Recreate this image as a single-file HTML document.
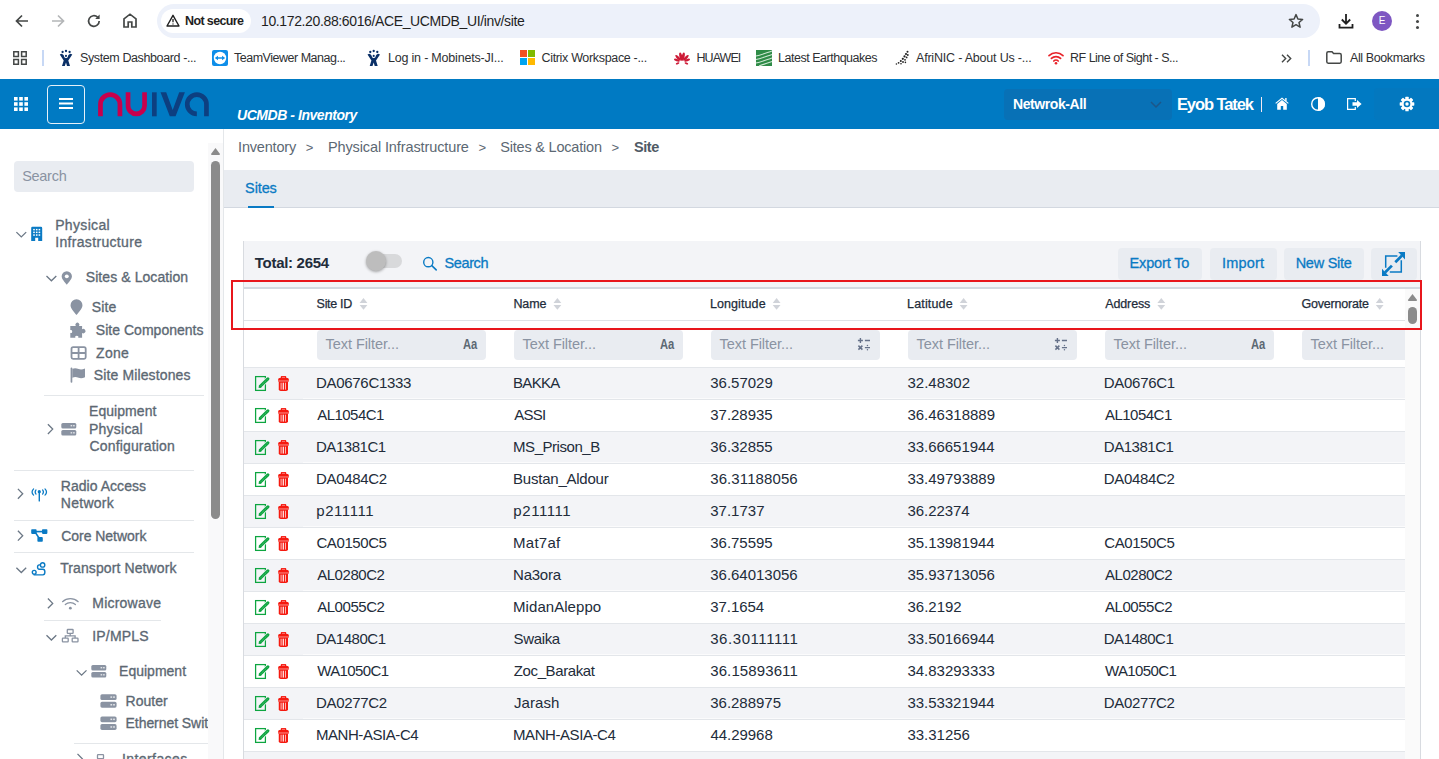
<!DOCTYPE html>
<html>
<head>
<meta charset="utf-8">
<title>Site</title>
<style>
*{box-sizing:border-box;margin:0;padding:0}
html,body{width:1439px;height:759px;overflow:hidden;background:#fff}
body{font-family:"Liberation Sans",sans-serif;position:relative;color:#222c3a;font-size:14.5px;line-height:17px}
div,span{font-family:"Liberation Sans",sans-serif}
.a{position:absolute;white-space:nowrap}
svg{display:block;position:absolute;overflow:visible}
/* ---------- browser chrome ---------- */
#chrome{position:absolute;left:0;top:0;width:1439px;height:79px;background:#fff;overflow:hidden}
#omni{position:absolute;left:157px;top:4px;width:1163px;height:34px;border-radius:17px;background:#edf1fa}
#chip{position:absolute;left:161px;top:9px;width:90px;height:24px;border-radius:12px;background:#fff}
#chiptx{left:185px;top:13px;font-size:12.500px;line-height:16px;font-weight:700;color:#1f1f1f;letter-spacing:-.62px}
#url{left:261px;top:12px;font-size:14px;line-height:18px;color:#1f1f1f;letter-spacing:-.37px}
.bm{position:absolute;top:50px;font-size:12.5px;color:#2e3033;white-space:nowrap;letter-spacing:-.2px;line-height:16px}
/* ---------- app header ---------- */
#hdr{position:absolute;left:0;top:79px;width:1439px;height:50px;background:#007ac3;overflow:hidden}
/* ---------- sidebar ---------- */
#side{position:absolute;left:0;top:0;width:208px;height:759px;overflow:hidden}
#sideborder{position:absolute;left:223px;top:129px;width:1px;height:630px;background:#e4e7ea}
.nav{position:absolute;color:#5c6873;white-space:nowrap;-webkit-text-stroke:.33px #5c6873}
.hr{position:absolute;height:1px;background:#e4e7ea}
/* ---------- main ---------- */
#main{position:absolute;left:0;top:0;width:1439px;height:759px;overflow:hidden}
</style>
</head>
<body>
<div id="chrome">
  <!-- back -->
  <svg style="left:15px;top:14px" width="14" height="14" viewBox="0 0 14 14"><path d="M13 7H2M7 1.5L1.5 7L7 12.5" fill="none" stroke="#444746" stroke-width="1.7"/></svg>
  <!-- forward -->
  <svg style="left:51px;top:14px" width="14" height="14" viewBox="0 0 14 14"><path d="M1 7H12M7 1.5L12.5 7L7 12.5" fill="none" stroke="#b4b6b8" stroke-width="1.7"/></svg>
  <!-- reload -->
  <svg style="left:86px;top:13px" width="16" height="16" viewBox="0 0 16 16"><path d="M13.2 8A5.3 5.3 0 1 1 11.6 4.2" fill="none" stroke="#444746" stroke-width="1.7"/><path d="M13.6 1.6V6H9.2Z" fill="#444746"/></svg>
  <!-- home -->
  <svg style="left:123px;top:13px" width="14" height="15" viewBox="0 0 14 15"><path d="M1 14V5.8L7 1.2L13 5.8V14H8.8V9H5.2V14Z" fill="none" stroke="#444746" stroke-width="1.7" stroke-linejoin="miter"/></svg>
  <div id="omni"></div>
  <div id="chip"></div>
  <!-- warning triangle -->
  <svg style="left:166px;top:14px" width="14" height="13" viewBox="0 0 14 13"><path d="M7 1.3L13 12H1Z" fill="none" stroke="#1f1f1f" stroke-width="1.4" stroke-linejoin="round"/><path d="M7 5V8.3M7 9.4V10.6" stroke="#1f1f1f" stroke-width="1.3"/></svg>
  <div class="a" id="chiptx">Not secure</div>
  <div class="a" id="url">10.172.20.88:6016/ACE_UCMDB_UI/inv/site</div>
  <!-- star -->
  <svg style="left:1288px;top:13px" width="16" height="16" viewBox="0 0 16 16"><path d="M8 1.6L9.9 6L14.6 6.4L11 9.5L12.1 14.2L8 11.7L3.9 14.2L5 9.5L1.4 6.4L6.1 6Z" fill="none" stroke="#444746" stroke-width="1.5" stroke-linejoin="round"/></svg>
  <!-- download -->
  <svg style="left:1338px;top:13px" width="16" height="16" viewBox="0 0 16 16"><path d="M8 1V10.5M3.8 6.5L8 10.7L12.2 6.5M1.5 11V14.6H14.5V11" fill="none" stroke="#1f1f1f" stroke-width="1.8"/></svg>
  <!-- avatar -->
  <div class="a" style="left:1372px;top:11px;width:20px;height:20px;border-radius:10px;background:#7e57c2;color:#fff;font-size:10px;line-height:20px;text-align:center;font-weight:400">E</div>
  <!-- dots -->
  <div class="a" style="left:1416px;top:14px;width:3px;height:3px;border-radius:2px;background:#444746;box-shadow:0 6px 0 #444746,0 12px 0 #444746"></div>

  <!-- bookmarks bar -->
  <svg style="left:13px;top:51px" width="14" height="14" viewBox="0 0 14 14"><path d="M.8 .8H5.4V5.4H.8ZM8.6 .8H13.2V5.4H8.6ZM.8 8.6H5.4V13.2H.8ZM8.6 8.6H13.2V13.2H8.6Z" fill="none" stroke="#444746" stroke-width="1.5"/></svg>
  <div class="a" style="left:42px;top:50px;width:2px;height:16px;background:#c7d8f5"></div>
  <!-- atlassian-like figure 1 -->
  <svg style="left:59px;top:49px" width="15" height="18" viewBox="0 0 15 18"><g fill="#0a2f66"><circle cx="3.600" cy="3" r="1.150"/><circle cx="7" cy="2" r="1.150"/><circle cx="10.600" cy="3" r="1.150"/><path d="M.8 5.600L2.500 4.800L4 5.400L7 9.200L10 5.400L11.500 4.800L13.300 5.600L9.300 11.500L11 17H8L7 13.600L5.800 17H3L4.700 11.500Z"/></g><circle cx="7" cy="6.900" r="2" fill="#fff"/><circle cx="7" cy="6.900" r="1.050" fill="#0a2f66"/></svg>
  <div class="bm" style="left:80px;letter-spacing:-.39px">System Dashboard -...</div>
  <!-- teamviewer -->
  <svg style="left:212px;top:50px" width="16" height="16" viewBox="0 0 16 16"><rect width="16" height="16" rx="2" fill="#0e8ee9"/><circle cx="8" cy="8" r="6.2" fill="#fff"/><path d="M2.800 8L6 5.800V7.200H10V5.800L13.200 8L10 10.200V8.800H6V10.200Z" fill="#0e8ee9"/></svg>
  <div class="bm" style="left:234px;letter-spacing:-.49px">TeamViewer Manag...</div>
  <svg style="left:366px;top:49px" width="15" height="18" viewBox="0 0 15 18"><g transform="translate(0.7 0)"><g fill="#0a2f66"><circle cx="3.600" cy="3" r="1.150"/><circle cx="7" cy="2" r="1.150"/><circle cx="10.600" cy="3" r="1.150"/><path d="M.8 5.600L2.500 4.800L4 5.400L7 9.200L10 5.400L11.500 4.800L13.300 5.600L9.300 11.500L11 17H8L7 13.600L5.800 17H3L4.700 11.500Z"/></g><circle cx="7" cy="6.900" r="2" fill="#fff"/><circle cx="7" cy="6.900" r="1.050" fill="#0a2f66"/></g></svg>
  <div class="bm" style="left:388px">Log in - Mobinets-JI...</div>
  <!-- microsoft -->
  <svg style="left:520px;top:50px" width="15" height="15" viewBox="0 0 15 15"><rect width="7" height="7" fill="#f25022"/><rect x="8" width="7" height="7" fill="#7fba00"/><rect y="8" width="7" height="7" fill="#00a4ef"/><rect x="8" y="8" width="7" height="7" fill="#ffb900"/></svg>
  <div class="bm" style="left:541.500px;letter-spacing:-.33px">Citrix Workspace -...</div>
  <!-- huawei -->
  <svg style="left:673px;top:51px" width="18" height="15" viewBox="0 0 18 15"><g fill="#cd1a36"><ellipse cx="7.84" cy="5.52" rx="1.45" ry="4.2" transform="rotate(-12 7.84 5.52)"/><ellipse cx="10.16" cy="5.52" rx="1.45" ry="4.2" transform="rotate(12 10.16 5.52)"/><ellipse cx="5.11" cy="6.83" rx="1.35" ry="3.7" transform="rotate(-43 5.11 6.83)"/><ellipse cx="12.89" cy="6.83" rx="1.35" ry="3.7" transform="rotate(43 12.89 6.83)"/><ellipse cx="3.80" cy="9.21" rx="1.2" ry="3.0" transform="rotate(-71 3.80 9.21)"/><ellipse cx="14.20" cy="9.21" rx="1.2" ry="3.0" transform="rotate(71 14.20 9.21)"/><ellipse cx="4.60" cy="12.34" rx="0.9" ry="1.9" transform="rotate(-107 4.60 12.34)"/><ellipse cx="13.40" cy="12.34" rx="0.9" ry="1.9" transform="rotate(107 13.40 12.34)"/></g></svg>
  <div class="bm" style="left:696.500px;letter-spacing:-.95px">HUAWEI</div>
  <!-- earthquakes -->
  <svg style="left:756px;top:50px" width="16" height="16" viewBox="0 0 16 16"><rect width="16" height="16" fill="#2e8b47"/><path d="M0 6C5 5 10 3 16 1M0 9.500C5 8.500 10 6.500 16 4.500M0 13C5 12 10 10 16 8M3 16C8 14 12 13 16 11.500" stroke="#cfe8d4" stroke-width="1.100" fill="none"/></svg>
  <div class="bm" style="left:778px;letter-spacing:-.48px">Latest Earthquakes</div>
  <!-- afrinic -->
  <svg style="left:894px;top:50px" width="16" height="16" viewBox="0 0 16 16"><g fill="#222"><circle cx="13.500" cy="1.800" r="1"/><circle cx="12" cy="4" r="1.100"/><circle cx="13.800" cy="5" r=".9"/><circle cx="10.500" cy="6.400" r="1.100"/><circle cx="12.600" cy="7.400" r=".9"/><circle cx="8.800" cy="8.800" r="1.100"/><circle cx="11" cy="9.800" r=".9"/><circle cx="6.800" cy="11" r="1"/><circle cx="9" cy="12" r=".9"/><circle cx="4.600" cy="12.800" r=".9"/><circle cx="7" cy="13.800" r=".8"/><circle cx="2.400" cy="14" r=".8"/><circle cx="11.400" cy="12.400" r=".8"/></g></svg>
  <div class="bm" style="left:916px">AfriNIC - About Us -...</div>
  <!-- wifi red -->
  <svg style="left:1048px;top:51px" width="16" height="14" viewBox="0 0 16 14"><path d="M1 4.600C5 .8 11 .8 15 4.600M3.400 7.400C6 4.900 10 4.900 12.600 7.400M5.800 10C7 8.800 9 8.800 10.200 10" fill="none" stroke="#e8232a" stroke-width="1.700" stroke-linecap="round"/><circle cx="8" cy="12.300" r="1.300" fill="#e8232a"/></svg>
  <div class="bm" style="left:1070px;letter-spacing:-.5px">RF Line of Sight - S...</div>
  <!-- chevrons -->
  <svg style="left:1281px;top:54px" width="11" height="9" viewBox="0 0 11 9"><path d="M1 .8L4.700 4.500L1 8.200M6 .8L9.700 4.500L6 8.200" fill="none" stroke="#444746" stroke-width="1.400"/></svg>
  <div class="a" style="left:1308px;top:50px;width:2px;height:16px;background:#c7d8f5"></div>
  <!-- folder -->
  <svg style="left:1326px;top:51px" width="16" height="13" viewBox="0 0 16 13"><path d="M.8 2.200Q.8 .8 2.200 .8H6L7.600 2.600H13.800Q15.200 2.600 15.200 4V10.800Q15.200 12.200 13.800 12.200H2.200Q.8 12.200 .8 10.800Z" fill="none" stroke="#444746" stroke-width="1.500"/></svg>
  <div class="bm" style="left:1350px;letter-spacing:-.4px">All Bookmarks</div>
</div>
<div id="hdr">
  <!-- 3x3 grid -->
  <svg style="left:14px;top:18px" width="14" height="14" viewBox="0 0 14 14"><g fill="#fff"><rect x="0" y="0" width="3.6" height="3.6"/><rect x="5.200" y="0" width="3.600" height="3.600"/><rect x="10.400" y="0" width="3.600" height="3.600"/><rect x="0" y="5.200" width="3.600" height="3.600"/><rect x="5.200" y="5.200" width="3.600" height="3.600"/><rect x="10.400" y="5.200" width="3.600" height="3.600"/><rect x="0" y="10.400" width="3.600" height="3.600"/><rect x="5.200" y="10.400" width="3.600" height="3.600"/><rect x="10.400" y="10.400" width="3.600" height="3.600"/></g></svg>
  <!-- hamburger -->
  <div class="a" style="left:47px;top:6px;width:38px;height:39px;border:1px solid #e6f1f9;border-radius:4px"></div>
  <div class="a" style="left:59px;top:19px;width:14px;height:2px;background:#fff;box-shadow:0 4.500px 0 #fff,0 9px 0 #fff"></div>
  <!-- logo -->
  <svg style="left:0;top:0" width="230" height="50" viewBox="0 0 230 50">
    <g fill="none" stroke-width="4.700">
      <path d="M100.450 37.300V25.400A9.750 9.750 0 0 1 119.950 25.400V37.300" stroke="#c7004c"/>
      <path d="M128.050 13.300V26.700A8.250 8.250 0 0 0 144.550 26.700V13.300" stroke="#c7004c"/>
      <path d="M154.350 13.300V37.300" stroke="#0d3f80"/>
      <path d="M206.450 37.300V25.300A9.600 9.600 0 1 0 196.850 34.900" stroke="#0d3f80"/>
    </g>
    <path d="M160.500 13.300H166.200L172.700 31L179.200 13.300H184.900L175.600 37.300H169.800Z" fill="#0d3f80"/>
  </svg>
  <div class="a" style="left:237px;top:27px;font-size:14px;line-height:18px;font-weight:700;font-style:italic;color:#fff;letter-spacing:-.45px">UCMDB - Inventory</div>
  <!-- select -->
  <div class="a" style="left:1004px;top:10px;width:168px;height:31px;border-radius:4px;background:#0871b6"></div>
  <div class="a" style="left:1013px;top:16px;font-size:14px;line-height:18px;font-weight:700;color:#fff;letter-spacing:-.42px">Netwrok-All</div>
  <svg style="left:1150px;top:22px" width="12" height="7" viewBox="0 0 12 7"><path d="M1 1L6 6L11 1" fill="none" stroke="#1d5688" stroke-width="1.500"/></svg>
  <div class="a" style="left:1176.90px;top:15px;font-size:16.500px;line-height:20px;font-weight:700;color:#fff;letter-spacing:-1.08px">Eyob Tatek</div>
  <div class="a" style="left:1261px;top:17.500px;width:1.400px;height:15px;background:#f4e9f2"></div>
  <!-- home -->
  <svg style="left:1275px;top:18px" width="14" height="13" viewBox="0 0 14 13"><path d="M7 .4L.3 6L1 6.800L7 1.900L13 6.800L13.700 6Z" fill="#fff"/><path d="M7 3L2.200 6.900V12.800H5.800V9H8.200V12.800H11.800V6.900Z" fill="#fff"/><rect x="10.200" y="1" width="1.400" height="3" fill="#fff"/></svg>
  <!-- contrast -->
  <svg style="left:1311px;top:18px" width="14" height="14" viewBox="0 0 14 14"><circle cx="7" cy="7" r="6.300" fill="none" stroke="#fff" stroke-width="1.400"/><path d="M7 0A7 7 0 0 1 7 14Z" fill="#fff"/></svg>
  <!-- logout -->
  <svg style="left:1347px;top:19px" width="15" height="12" viewBox="0 0 15 12"><path d="M8.300 3V.600H.600V11.400H8.300V9" fill="none" stroke="#fff" stroke-width="1.200"/><path d="M5.500 4.300H10V2L14.600 6L10 10V7.700H5.500Z" fill="#fff"/></svg>
  <!-- gear button -->
  <div class="a" style="left:1374px;top:9px;width:65px;height:32px;background:#0378bf;border-radius:4px 0 0 4px"></div>
  <svg style="left:1399px;top:17px" width="16" height="16" viewBox="-8 -8 16 16"><g fill="#fff"><circle r="5.400"/><g><rect x="-1.700" y="-7.300" width="3.400" height="14.600" rx=".6"/></g><rect x="-1.700" y="-7.300" width="3.400" height="14.600" rx=".6" transform="rotate(45)"/><rect x="-1.700" y="-7.300" width="3.400" height="14.600" rx=".6" transform="rotate(90)"/><rect x="-1.700" y="-7.300" width="3.400" height="14.600" rx=".6" transform="rotate(135)"/></g><circle r="3.300" fill="#0378bf"/><circle r="1.700" fill="#fff"/></svg>
</div>
<div id="side">
<div class="a" style="left:14px;top:161px;width:180px;height:31px;border-radius:4px;background:#e9ecf1"></div>
<div class="a " style="left:22.14px;top:168px;font-size:14.5px;line-height:17px;letter-spacing:-0.27px;color:#8a93a2">Search</div>
<svg style="left:15px;top:231px" width="11" height="6" viewBox="0 0 11 6"><g transform="translate(0.8 0.6)"><path d="M.6 .5L5.500 5.300L10.400 .5" fill="none" stroke="#6b7785" stroke-width="1.300"/></g></svg>
<svg style="left:31px;top:226px" width="11" height="14.200" viewBox="0 0 11 14.200"><g transform="translate(0.2 0.7)"><path d="M1.200 0H9.800Q11 0 11 1.200V14.200H7V11H4V14.200H0V1.200Q0 0 1.200 0Z" fill="#0a7ac4"/><g fill="#fff"><rect x="2" y="2.200" width="1.600" height="1.500"/><rect x="4.700" y="2.200" width="1.600" height="1.500"/><rect x="7.400" y="2.200" width="1.600" height="1.500"/><rect x="2" y="4.900" width="1.600" height="1.500"/><rect x="4.700" y="4.900" width="1.600" height="1.500"/><rect x="7.400" y="4.900" width="1.600" height="1.500"/><rect x="2" y="7.600" width="1.600" height="1.500"/><rect x="4.700" y="7.600" width="1.600" height="1.500"/><rect x="7.400" y="7.600" width="1.600" height="1.500"/></g></g></svg>
<div class="a nav" style="left:55.21px;top:217px;font-size:14px;line-height:17px;letter-spacing:0.33px;">Physical<br>Infrastructure</div>
<svg style="left:45px;top:275px" width="11" height="6" viewBox="0 0 11 6"><g transform="translate(0.9 0.5)"><path d="M.6 .5L5.500 5.300L10.400 .5" fill="none" stroke="#6b7785" stroke-width="1.300"/></g></svg>
<svg style="left:61px;top:271px" width="11" height="13.6" viewBox="0 0 11 14"><g transform="translate(0.3 0.21)"><path d="M5.500 0A5.300 5.300 0 0 1 10.800 5.300C10.800 8.200 7.500 11.500 5.500 14C3.500 11.500 .2 8.200 .2 5.300A5.300 5.300 0 0 1 5.500 0Z" fill="#8a93a2"/><circle cx="5.500" cy="5.300" r="2" fill="#fff"/></g></svg>
<div class="a nav" style="left:85.76px;top:269px;font-size:14px;line-height:17px;letter-spacing:0.08px;">Sites &amp; Location</div>
<svg style="left:70px;top:299px" width="12.4" height="15.9" viewBox="0 0 11 14"><g transform="translate(0.27 0.09)"><path d="M5.500 0A5.300 5.300 0 0 1 10.800 5.300C10.800 8.200 7.500 11.500 5.500 14C3.500 11.500 .2 8.200 .2 5.300A5.300 5.300 0 0 1 5.500 0Z" fill="#8a93a2"/></g></svg>
<div class="a nav" style="left:91.86px;top:299px;font-size:14px;line-height:17px;letter-spacing:0.14px;">Site</div>
<svg style="left:70px;top:322px" width="16.100" height="15.500" viewBox="0 0 16.100 15.500"><g transform="translate(0.3 0.3)"><path d="M0 3.600H5.500A2 2 0 1 1 8.700 3.600H11.800V7A2.200 2.200 0 1 1 11.800 10.600V15.500H7.900A1.500 1.500 0 1 0 5.100 15.500H0V10.400A1.400 1.400 0 1 0 0 7.800Z" fill="#8a93a2"/></g></svg>
<div class="a nav" style="left:95.86px;top:322px;font-size:14px;line-height:17px;letter-spacing:0.02px;">Site Components</div>
<svg style="left:70px;top:346px" width="16" height="13.400" viewBox="0 0 16 13.400"><g transform="translate(0.6 0.3)"><rect x=".9" y=".9" width="14.200" height="11.600" rx="1.600" fill="none" stroke="#8a93a2" stroke-width="1.800"/><path d="M8 .9V12.500M.9 6.700H15.100" stroke="#8a93a2" stroke-width="1.800"/></g></svg>
<div class="a nav" style="left:96.06px;top:345px;font-size:14px;line-height:17px;letter-spacing:0.31px;">Zone</div>
<svg style="left:70px;top:367px" width="14.400" height="15.200" viewBox="0 0 14.400 15.200"><g transform="translate(0.6 0.6)"><rect x="0" y="0" width="1.700" height="15.200" rx=".8" fill="#8a93a2"/><path d="M1.700 1.200C4 .2 6 .6 8 1.400C10 2.200 12 2 14.400 .8V9.600C12 10.800 10 11 8 10.200C6 9.400 4 9 1.700 10.200Z" fill="#8a93a2"/></g></svg>
<div class="a nav" style="left:93.86px;top:367px;font-size:14px;line-height:17px;letter-spacing:0.12px;">Site Milestones</div>
<div class="hr" style="left:44px;top:395px;width:160px"></div>
<svg style="left:47px;top:423px" width="6" height="11" viewBox="0 0 6 11"><g transform="translate(0.4 0.6)"><path d="M.5 .6L5.300 5.500L.5 10.400" fill="none" stroke="#6b7785" stroke-width="1.300"/></g></svg>
<svg style="left:61px;top:423px" width="15" height="12.500" viewBox="0 0 15 12.500"><g transform="translate(0.3 0)"><rect x="0" y="0" width="15" height="5.400" rx="1.500" fill="#8a93a2"/><rect x="0" y="7.100" width="15" height="5.400" rx="1.500" fill="#8a93a2"/><rect x="9.300" y="2" width="1.600" height="1.400" fill="#fff" opacity=".75"/><rect x="11.800" y="2" width="1.600" height="1.400" fill="#fff" opacity=".75"/><rect x="9.300" y="9.100" width="1.600" height="1.400" fill="#fff" opacity=".75"/><rect x="11.800" y="9.100" width="1.600" height="1.400" fill="#fff" opacity=".75"/></g></svg>
<div class="a nav" style="left:89.05px;top:403px;font-size:14px;line-height:17px;letter-spacing:0.05px;">Equipment</div>
<div class="a nav" style="left:89.05px;top:421px;font-size:14px;line-height:17px;letter-spacing:0.22px;">Physical</div>
<div class="a nav" style="left:89.49px;top:438px;font-size:14px;line-height:17px;letter-spacing:0.16px;">Configuration</div>
<div class="hr" style="left:14px;top:470px;width:180px"></div>
<svg style="left:17px;top:488px" width="6" height="11" viewBox="0 0 6 11"><g transform="translate(0.4 0.3)"><path d="M.5 .6L5.300 5.500L.5 10.400" fill="none" stroke="#6b7785" stroke-width="1.300"/></g></svg>
<svg style="left:31px;top:488px" width="16.200" height="13.300" viewBox="0 0 16.200 13.300"><g transform="translate(0.2 0.3)"><g fill="none" stroke="#0a7ac4" stroke-width="1.200" stroke-linecap="round"><path d="M4.800 1.600C3.800 2.800 3.800 4.600 4.800 5.800M2.400 .6C.5 2.600 .5 5 2.400 6.900M11.400 1.600C12.400 2.800 12.400 4.600 11.400 5.800M13.800 .6C15.700 2.600 15.700 5 13.800 6.900"/></g><circle cx="8.100" cy="3.400" r="1.600" fill="#0a7ac4"/><rect x="7.400" y="3.400" width="1.400" height="9.900" rx=".6" fill="#0a7ac4"/></g></svg>
<div class="a nav" style="left:60.75px;top:478px;font-size:14px;line-height:17px;letter-spacing:0.04px;">Radio Access</div>
<div class="a nav" style="left:60.75px;top:495px;font-size:14px;line-height:17px;letter-spacing:0.28px;">Network</div>
<div class="hr" style="left:14px;top:520px;width:180px"></div>
<svg style="left:17px;top:530px" width="6" height="11" viewBox="0 0 6 11"><g transform="translate(0.4 0.2)"><path d="M.5 .6L5.300 5.500L.5 10.400" fill="none" stroke="#6b7785" stroke-width="1.300"/></g></svg>
<svg style="left:31px;top:529px" width="16.200" height="12.400" viewBox="0 0 16.200 12.400"><g transform="translate(0.2 0.3)"><g fill="#0a7ac4"><rect x="0" y="0" width="5.400" height="4.600" rx=".8"/><rect x="10.800" y="0" width="5.400" height="4.600" rx=".8"/><rect x="6.200" y="7.800" width="5.400" height="4.600" rx=".8"/><rect x="4" y="1.500" width="8" height="1.600"/><path d="M3.400 3.400L4.800 2.600L8.600 8.400L7.200 9.200Z"/></g></g></svg>
<div class="a nav" style="left:61.19px;top:528px;font-size:14px;line-height:17px;letter-spacing:-0.03px;">Core Network</div>
<div class="hr" style="left:14px;top:552px;width:180px"></div>
<svg style="left:15px;top:567px" width="11" height="6" viewBox="0 0 11 6"><g transform="translate(0.8 0.2)"><path d="M.6 .5L5.500 5.300L10.400 .5" fill="none" stroke="#6b7785" stroke-width="1.300"/></g></svg>
<svg style="left:31px;top:561px" width="14.300" height="13.800" viewBox="0 0 14.300 13.800"><g transform="translate(0.6 0.9)"><g fill="none" stroke="#0a7ac4" stroke-width="1.400"><circle cx="11" cy="3" r="2.200"/><circle cx="2.600" cy="10.400" r="1.900"/><path d="M8.800 3H7.600C5.400 3 5.400 7.400 7.600 7.400H11.200C14 7.400 14 13 11.200 13H2.600" stroke-linecap="round"/></g></g></svg>
<div class="a nav" style="left:60.19px;top:560px;font-size:14px;line-height:17px;letter-spacing:0.1px;">Transport Network</div>
<svg style="left:47px;top:597px" width="6" height="11" viewBox="0 0 6 11"><g transform="translate(0.4 0.9)"><path d="M.5 .6L5.300 5.500L.5 10.400" fill="none" stroke="#6b7785" stroke-width="1.300"/></g></svg>
<svg style="left:61px;top:597px" width="17.300" height="11.800" viewBox="0 0 17.300 11.800"><g transform="translate(0.7 0.9)"><g fill="none" stroke="#8a93a2" stroke-width="1.200" stroke-linecap="round"><path d="M.8 3.800C5.200 -.4 12.100 -.4 16.500 3.800M3.600 6.600C6.400 4 10.900 4 13.700 6.600"/></g><circle cx="8.650" cy="10.300" r="1.400" fill="#8a93a2"/></g></svg>
<div class="a nav" style="left:92.35px;top:595px;font-size:14px;line-height:17px;letter-spacing:0.21px;">Microwave</div>
<div class="hr" style="left:44px;top:620px;width:117px"></div>
<svg style="left:45px;top:634px" width="11" height="6" viewBox="0 0 11 6"><g transform="translate(0.9 0.7)"><path d="M.6 .5L5.500 5.300L10.400 .5" fill="none" stroke="#6b7785" stroke-width="1.300"/></g></svg>
<svg style="left:61px;top:628px" width="17" height="13.800" viewBox="0 0 17 13.800"><g transform="translate(0.7 0.8)"><g fill="none" stroke="#8a93a2" stroke-width="1.300"><rect x="5.600" y=".7" width="5.800" height="3.800" rx=".6"/><rect x=".7" y="9.300" width="5.800" height="3.800" rx=".6"/><rect x="10.500" y="9.300" width="5.800" height="3.800" rx=".6"/><path d="M8.500 4.500V7H3.600V9.300M8.500 7H13.400V9.300"/></g></g></svg>
<div class="a nav" style="left:92.21px;top:628px;font-size:14px;line-height:17px;letter-spacing:0.21px;">IP/MPLS</div>
<svg style="left:76px;top:669px" width="11" height="6" viewBox="0 0 11 6"><g transform="translate(0.1 0.9)"><path d="M.6 .5L5.500 5.300L10.400 .5" fill="none" stroke="#6b7785" stroke-width="1.300"/></g></svg>
<svg style="left:91px;top:665px" width="15" height="12.500" viewBox="0 0 15 12.500"><g transform="translate(0.3 0)"><rect x="0" y="0" width="15" height="5.400" rx="1.500" fill="#8a93a2"/><rect x="0" y="7.100" width="15" height="5.400" rx="1.500" fill="#8a93a2"/><rect x="9.300" y="2" width="1.600" height="1.400" fill="#fff" opacity=".75"/><rect x="11.800" y="2" width="1.600" height="1.400" fill="#fff" opacity=".75"/><rect x="9.300" y="9.100" width="1.600" height="1.400" fill="#fff" opacity=".75"/><rect x="11.800" y="9.100" width="1.600" height="1.400" fill="#fff" opacity=".75"/></g></svg>
<div class="a nav" style="left:119.05px;top:663px;font-size:14px;line-height:17px;letter-spacing:0.01px;">Equipment</div>
<svg style="left:100px;top:694px" width="16.200" height="13.900" viewBox="0 0 15 12.500"><g transform="translate(0.37 0)"><rect x="0" y="0" width="15" height="5.400" rx="1.500" fill="#8a93a2"/><rect x="0" y="7.100" width="15" height="5.400" rx="1.500" fill="#8a93a2"/><rect x="9.300" y="2" width="1.600" height="1.400" fill="#fff" opacity=".75"/><rect x="11.800" y="2" width="1.600" height="1.400" fill="#fff" opacity=".75"/><rect x="9.300" y="9.100" width="1.600" height="1.400" fill="#fff" opacity=".75"/><rect x="11.800" y="9.100" width="1.600" height="1.400" fill="#fff" opacity=".75"/></g></svg>
<div class="a nav" style="left:125.55px;top:693px;font-size:14px;line-height:17px;letter-spacing:0.03px;">Router</div>
<svg style="left:100px;top:716px" width="16.200" height="13.900" viewBox="0 0 15 12.500"><g transform="translate(0.37 0.18)"><rect x="0" y="0" width="15" height="5.400" rx="1.500" fill="#8a93a2"/><rect x="0" y="7.100" width="15" height="5.400" rx="1.500" fill="#8a93a2"/><rect x="9.300" y="2" width="1.600" height="1.400" fill="#fff" opacity=".75"/><rect x="11.800" y="2" width="1.600" height="1.400" fill="#fff" opacity=".75"/><rect x="9.300" y="9.100" width="1.600" height="1.400" fill="#fff" opacity=".75"/><rect x="11.800" y="9.100" width="1.600" height="1.400" fill="#fff" opacity=".75"/></g></svg>
<div class="a nav" style="left:125.55px;top:715px;font-size:14px;line-height:17px;letter-spacing:-0.06px;">Ethernet Switch</div>
<div class="hr" style="left:74px;top:743px;width:140px"></div>
<svg style="left:77px;top:753px" width="6" height="11" viewBox="0 0 6 11"><g transform="translate(0 0.3)"><path d="M.5 .6L5.300 5.500L.5 10.400" fill="none" stroke="#6b7785" stroke-width="1.300"/></g></svg>
<svg style="left:93px;top:754px" width="15" height="13" viewBox="0 0 15 13"><g fill="none" stroke="#8a93a2" stroke-width="1.300"><rect x="4.500" y=".7" width="6" height="4" rx=".6"/><path d="M7.500 4.700V8"/></g></svg>
<div class="a nav" style="left:121.91px;top:751px;font-size:14px;line-height:17px;letter-spacing:0.43px;">Interfaces</div>
</div>
<div class="a" style="left:208px;top:143px;width:15px;height:616px;background:#f9f9fa"></div>
<svg style="left:211px;top:147px" width="9" height="7" viewBox="0 0 9 7"><g transform="translate(0 0.9)"><path d="M4.500 0L9 6Q9 7 8 7H1Q0 7 0 6Z" fill="#8b8b8b"/></g></svg>
<div class="a" style="left:211px;top:161px;width:9px;height:357.500px;border-radius:4.500px;background:#8b8b8b"></div>
<div id="sideborder"></div>
<div id="main">
<div class="a " style="left:238.06px;top:138px;font-size:14.5px;line-height:18px;letter-spacing:-0.19px;color:#5c6873;">Inventory</div>
<div class="a " style="left:305.66px;top:139px;font-size:13px;line-height:18px;letter-spacing:0px;color:#5c6873;">&gt;</div>
<div class="a " style="left:327.91px;top:138px;font-size:14.5px;line-height:18px;letter-spacing:-0.11px;color:#5c6873;">Physical Infrastructure</div>
<div class="a " style="left:478.56px;top:139px;font-size:13px;line-height:18px;letter-spacing:0px;color:#5c6873;">&gt;</div>
<div class="a " style="left:500.34px;top:138px;font-size:14.5px;line-height:18px;letter-spacing:-0.21px;color:#5c6873;">Sites &amp; Location</div>
<div class="a " style="left:611.56px;top:139px;font-size:13px;line-height:18px;letter-spacing:0px;color:#5c6873;">&gt;</div>
<div class="a " style="left:634.08px;top:138px;font-size:14.5px;line-height:18px;font-weight:700;letter-spacing:-0.49px;color:#4f5a65;">Site</div>
<div class="a" style="left:224px;top:170px;width:1215px;height:38px;background:#e9ecf1;border-bottom:1px solid #d3d8e0"></div>
<div class="a " style="left:245.09px;top:179px;font-size:14.5px;line-height:18px;letter-spacing:-0.12px;color:#0a7ac4;-webkit-text-stroke:.3px #0a7ac4;">Sites</div>
<div class="a" style="left:247.800px;top:205.600px;width:26.200px;height:2px;background:#0a7ac4"></div>
<div class="a" style="left:243px;top:241px;width:1178px;height:518px;background:#f3f4f7;border-left:1px solid #d8dbe0;border-right:1px solid #d8dbe0"></div>
<div class="a " style="left:254.83px;top:254px;font-size:15px;line-height:18px;font-weight:700;letter-spacing:-0.3px;color:#222c3a;">Total: 2654</div>
<div class="a" style="left:374px;top:254px;width:28px;height:14px;border-radius:7px;background:#d8d9db"></div>
<div class="a" style="left:365.500px;top:251px;width:20px;height:20px;border-radius:10px;background:#bdbdbd;box-shadow:0 1px 3px rgba(0,0,0,.35)"></div>
<svg style="left:422px;top:256px" width="15" height="15.500" viewBox="0 0 15 15.500"><g transform="translate(0.5 0)"><circle cx="5.800" cy="6.150" r="4.600" fill="none" stroke="#0a7ac4" stroke-width="1.400"/><path d="M9.300 9.700L13.700 13.900" stroke="#0a7ac4" stroke-width="1.600" stroke-linecap="round"/></g></svg>
<div class="a " style="left:444.59px;top:254px;font-size:14.5px;line-height:18px;letter-spacing:-0.41px;color:#0a7ac4;-webkit-text-stroke:.3px #0a7ac4;">Search</div>
<div class="a" style="left:1118px;top:248px;width:84px;height:32px;border-radius:4px;background:#e9ecf1"></div>
<div class="a" style="left:1210px;top:248px;width:67px;height:32px;border-radius:4px;background:#e9ecf1"></div>
<div class="a" style="left:1284px;top:248px;width:80px;height:32px;border-radius:4px;background:#e9ecf1"></div>
<div class="a" style="left:1371px;top:248px;width:46px;height:32px;border-radius:4px;background:#e9ecf1"></div>
<div class="a " style="left:1129.56px;top:254px;font-size:14.5px;line-height:18px;letter-spacing:-0.14px;color:#0a7ac4;-webkit-text-stroke:.3px #0a7ac4;">Export To</div>
<div class="a " style="left:1222.01px;top:254px;font-size:14.5px;line-height:18px;letter-spacing:0.21px;color:#0a7ac4;-webkit-text-stroke:.3px #0a7ac4;">Import</div>
<div class="a " style="left:1295.66px;top:254px;font-size:14.5px;line-height:18px;letter-spacing:-0.26px;color:#0a7ac4;-webkit-text-stroke:.3px #0a7ac4;">New Site</div>
<svg style="left:1382px;top:252px" width="23" height="24" viewBox="0 0 23 24"><g fill="none" stroke="#0a7ac4" stroke-width="1.500"><path d="M3.700 15.700V4.100H15.400M7.800 20H19.300V8.300"/></g><path d="M13.300 10.200L20 3.500" stroke="#0a7ac4" stroke-width="2.700"/><path d="M16.200 0H23V7.400Z" fill="#0a7ac4"/><path d="M9.900 13.600L3 20.500" stroke="#0a7ac4" stroke-width="2.700"/><path d="M0 16.800V24H6.700Z" fill="#0a7ac4"/></svg>
<div class="a" style="left:244px;top:287px;width:1176px;height:2px;background:#d3d8e0"></div>
<div class="a" style="left:1405px;top:289px;width:15px;height:470px;background:#fafafa"></div>
<div class="a" style="left:244px;top:289px;width:1161px;height:78px;background:#fff"></div>
<div class="a" style="left:244px;top:320px;width:1161px;height:1px;background:#dfe2e6"></div>
<div class="a " style="left:316.61px;top:296px;font-size:12.5px;line-height:16px;letter-spacing:-0.31px;color:#222c3a;-webkit-text-stroke:.25px #222c3a;">Site ID</div>
<svg style="left:359px;top:298px" width="7.800" height="11.700" viewBox="0 0 7.800 11.700"><g transform="translate(0.6 0.1)"><path d="M3.900 0L7.800 4.900H0Z" fill="#d0d3d9"/><path d="M3.900 11.700L7.800 6.800H0Z" fill="#d0d3d9"/></g></svg>
<div class="a " style="left:513.4px;top:296px;font-size:12.5px;line-height:16px;letter-spacing:-0.1px;color:#222c3a;-webkit-text-stroke:.25px #222c3a;">Name</div>
<svg style="left:553px;top:298px" width="7.800" height="11.700" viewBox="0 0 7.800 11.700"><g transform="translate(0.5 0.1)"><path d="M3.900 0L7.800 4.900H0Z" fill="#d0d3d9"/><path d="M3.900 11.700L7.800 6.800H0Z" fill="#d0d3d9"/></g></svg>
<div class="a " style="left:709.9px;top:296px;font-size:12.5px;line-height:16px;letter-spacing:0.1px;color:#222c3a;-webkit-text-stroke:.25px #222c3a;">Longitude</div>
<svg style="left:772px;top:298px" width="7.800" height="11.700" viewBox="0 0 7.800 11.700"><g transform="translate(0.7 0.1)"><path d="M3.900 0L7.800 4.900H0Z" fill="#d0d3d9"/><path d="M3.900 11.700L7.800 6.800H0Z" fill="#d0d3d9"/></g></svg>
<div class="a " style="left:907.1px;top:296px;font-size:12.5px;line-height:16px;letter-spacing:0.15px;color:#222c3a;-webkit-text-stroke:.25px #222c3a;">Latitude</div>
<svg style="left:959px;top:298px" width="7.800" height="11.700" viewBox="0 0 7.800 11.700"><g transform="translate(0.7 0.1)"><path d="M3.900 0L7.800 4.900H0Z" fill="#d0d3d9"/><path d="M3.900 11.700L7.800 6.800H0Z" fill="#d0d3d9"/></g></svg>
<div class="a " style="left:1105.3px;top:296px;font-size:12.5px;line-height:16px;letter-spacing:-0.14px;color:#222c3a;-webkit-text-stroke:.25px #222c3a;">Address</div>
<svg style="left:1157px;top:298px" width="7.800" height="11.700" viewBox="0 0 7.800 11.700"><g transform="translate(0.4 0.1)"><path d="M3.900 0L7.800 4.900H0Z" fill="#d0d3d9"/><path d="M3.900 11.700L7.800 6.800H0Z" fill="#d0d3d9"/></g></svg>
<div class="a " style="left:1301.5px;top:296px;font-size:12.5px;line-height:16px;letter-spacing:-0.2px;color:#222c3a;-webkit-text-stroke:.25px #222c3a;">Governorate</div>
<svg style="left:1375px;top:298px" width="7.800" height="11.700" viewBox="0 0 7.800 11.700"><g transform="translate(0.8 0.1)"><path d="M3.900 0L7.800 4.900H0Z" fill="#d0d3d9"/><path d="M3.900 11.700L7.800 6.800H0Z" fill="#d0d3d9"/></g></svg>
<div class="a" style="left:317px;top:330px;width:169px;height:30px;border-radius:4px;background:#e9ecf1"></div>
<div class="a " style="left:325.57px;top:335px;font-size:14.5px;line-height:18px;letter-spacing:-0.06px;color:#8a93a2;">Text Filter...</div>
<div class="a " style="left:462.82px;top:336px;font-size:14px;line-height:16px;font-weight:700;color:#5c6873;transform:scaleX(0.799);transform-origin:0 0;">Aa</div>
<div class="a" style="left:514px;top:330px;width:169px;height:30px;border-radius:4px;background:#e9ecf1"></div>
<div class="a " style="left:522.57px;top:335px;font-size:14.5px;line-height:18px;letter-spacing:-0.06px;color:#8a93a2;">Text Filter...</div>
<div class="a " style="left:659.82px;top:336px;font-size:14px;line-height:16px;font-weight:700;color:#5c6873;transform:scaleX(0.799);transform-origin:0 0;">Aa</div>
<div class="a" style="left:711px;top:330px;width:169px;height:30px;border-radius:4px;background:#e9ecf1"></div>
<div class="a " style="left:719.57px;top:335px;font-size:14.5px;line-height:18px;letter-spacing:-0.06px;color:#8a93a2;">Text Filter...</div>
<svg style="left:857px;top:338px" width="12.100" height="12" viewBox="0 0 12.100 12"><g transform="translate(0.9 0.1)"><g stroke="#66728a" fill="none"><path d="M0 2.450H5M2.500 0V4.900M7 2.450H12.100M7 9.500H12.100" stroke-width="1.400"/><path d="M.5 7.500L4.500 11.500M4.500 7.500L.5 11.500" stroke-width="1.500"/></g><circle cx="9.550" cy="7.300" r=".75" fill="#66728a"/><circle cx="9.550" cy="11.700" r=".75" fill="#66728a"/></g></svg>
<div class="a" style="left:908px;top:330px;width:169px;height:30px;border-radius:4px;background:#e9ecf1"></div>
<div class="a " style="left:916.57px;top:335px;font-size:14.5px;line-height:18px;letter-spacing:-0.06px;color:#8a93a2;">Text Filter...</div>
<svg style="left:1054px;top:338px" width="12.100" height="12" viewBox="0 0 12.100 12"><g transform="translate(0.9 0.1)"><g stroke="#66728a" fill="none"><path d="M0 2.450H5M2.500 0V4.900M7 2.450H12.100M7 9.500H12.100" stroke-width="1.400"/><path d="M.5 7.500L4.500 11.500M4.500 7.500L.5 11.500" stroke-width="1.500"/></g><circle cx="9.550" cy="7.300" r=".75" fill="#66728a"/><circle cx="9.550" cy="11.700" r=".75" fill="#66728a"/></g></svg>
<div class="a" style="left:1105px;top:330px;width:169px;height:30px;border-radius:4px;background:#e9ecf1"></div>
<div class="a " style="left:1113.57px;top:335px;font-size:14.5px;line-height:18px;letter-spacing:-0.06px;color:#8a93a2;">Text Filter...</div>
<div class="a " style="left:1250.82px;top:336px;font-size:14px;line-height:16px;font-weight:700;color:#5c6873;transform:scaleX(0.799);transform-origin:0 0;">Aa</div>
<div class="a" style="left:1302px;top:330px;width:103px;height:30px;border-radius:4px 0 0 4px;background:#e9ecf1"></div>
<div class="a " style="left:1310.57px;top:335px;font-size:14.5px;line-height:18px;letter-spacing:-0.06px;color:#8a93a2;">Text Filter...</div>
<div class="a" style="left:244px;top:367px;width:1161px;height:32px;background:#f3f4f7;border-top:1px solid #e3e6ea"></div>
<div class="a" style="left:303px;top:398px;width:1102px;height:1px;background:#fbfbfc"></div>
<svg style="left:254px;top:375px" width="16" height="16" viewBox="0 0 16 16"><g transform="translate(0.5 0.5)"><rect x="1.100" y="1.100" width="9.800" height="13.800" fill="none" stroke="#0da540" stroke-width="1.250"/><path d="M5.600 10.900L13.400 3.300" stroke="#f3f4f7" stroke-width="4.600" stroke-linecap="round"/><path d="M6 10.500L13.400 3.300" stroke="#0da540" stroke-width="3.100" stroke-linecap="round"/><path d="M4.100 12.500L4.500 9.600L7.100 12Z" fill="#0da540"/><path d="M6.300 10.300L13.100 3.600" stroke="#f3f4f7" stroke-width=".5" stroke-dasharray=".7 1" opacity=".8"/></g></svg>
<svg style="left:278px;top:375px" width="11" height="15.200" viewBox="0 0 11 15.200"><g transform="translate(0 0.9)"><rect x="2.800" y="0" width="5.400" height="2.600" rx=".9" fill="#f5190f"/><rect x="4" y="1" width="3" height=".8" fill="#fbb" /><path d="M0 5.700V4.100Q0 2 2.600 1.900H8.400Q11 2 11 4.100V5.700Z" fill="#f5190f"/><rect x="0" y="4.100" width="11" height=".7" fill="#fff" opacity=".4"/><path d="M.75 5.700H10V13.300Q10 15.100 8 15.100H2.750Q.75 15.100 .75 13.300Z" fill="#f5190f"/><rect x="2.300" y="6.800" width="2.400" height="6.900" fill="#fff" opacity=".45"/><rect x="5.100" y="6.800" width=".9" height="6.900" fill="#fff" opacity=".95"/><rect x="7.200" y="6.800" width=".8" height="6.900" fill="#fff" opacity=".85"/></g></svg>
<div class="a " style="left:315.97px;top:374px;font-size:15px;line-height:18px;letter-spacing:-0.3px;color:#222c3a;">DA0676C1333</div>
<div class="a " style="left:513.07px;top:374px;font-size:15px;line-height:18px;letter-spacing:-0.72px;color:#222c3a;">BAKKA</div>
<div class="a " style="left:710.23px;top:374px;font-size:15px;line-height:18px;letter-spacing:0px;color:#222c3a;">36.57029</div>
<div class="a " style="left:907.43px;top:374px;font-size:15px;line-height:18px;letter-spacing:0.01px;color:#222c3a;">32.48302</div>
<div class="a " style="left:1103.77px;top:374px;font-size:15px;line-height:18px;letter-spacing:-0.28px;color:#222c3a;">DA0676C1</div>
<div class="a" style="left:244px;top:399px;width:1161px;height:32px;background:#fff;border-top:1px solid #e3e6ea"></div>
<svg style="left:254px;top:407px" width="16" height="16" viewBox="0 0 16 16"><g transform="translate(0.5 0.5)"><rect x="1.100" y="1.100" width="9.800" height="13.800" fill="none" stroke="#0da540" stroke-width="1.250"/><path d="M5.600 10.900L13.400 3.300" stroke="#fff" stroke-width="4.600" stroke-linecap="round"/><path d="M6 10.500L13.400 3.300" stroke="#0da540" stroke-width="3.100" stroke-linecap="round"/><path d="M4.100 12.500L4.500 9.600L7.100 12Z" fill="#0da540"/><path d="M6.300 10.300L13.100 3.600" stroke="#fff" stroke-width=".5" stroke-dasharray=".7 1" opacity=".8"/></g></svg>
<svg style="left:278px;top:407px" width="11" height="15.200" viewBox="0 0 11 15.200"><g transform="translate(0 0.9)"><rect x="2.800" y="0" width="5.400" height="2.600" rx=".9" fill="#f5190f"/><rect x="4" y="1" width="3" height=".8" fill="#fbb" /><path d="M0 5.700V4.100Q0 2 2.600 1.900H8.400Q11 2 11 4.100V5.700Z" fill="#f5190f"/><rect x="0" y="4.100" width="11" height=".7" fill="#fff" opacity=".4"/><path d="M.75 5.700H10V13.300Q10 15.100 8 15.100H2.750Q.75 15.100 .75 13.300Z" fill="#f5190f"/><rect x="2.300" y="6.800" width="2.400" height="6.900" fill="#fff" opacity=".45"/><rect x="5.100" y="6.800" width=".9" height="6.900" fill="#fff" opacity=".95"/><rect x="7.200" y="6.800" width=".8" height="6.900" fill="#fff" opacity=".85"/></g></svg>
<div class="a " style="left:317.17px;top:406px;font-size:15px;line-height:18px;letter-spacing:-0.52px;color:#222c3a;">AL1054C1</div>
<div class="a " style="left:514.27px;top:406px;font-size:15px;line-height:18px;letter-spacing:-0.79px;color:#222c3a;">ASSI</div>
<div class="a " style="left:710.23px;top:406px;font-size:15px;line-height:18px;letter-spacing:-0.01px;color:#222c3a;">37.28935</div>
<div class="a " style="left:907.43px;top:406px;font-size:15px;line-height:18px;letter-spacing:-0px;color:#222c3a;">36.46318889</div>
<div class="a " style="left:1104.97px;top:406px;font-size:15px;line-height:18px;letter-spacing:-0.52px;color:#222c3a;">AL1054C1</div>
<div class="a" style="left:244px;top:431px;width:1161px;height:32px;background:#f3f4f7;border-top:1px solid #e3e6ea"></div>
<div class="a" style="left:303px;top:462px;width:1102px;height:1px;background:#fbfbfc"></div>
<svg style="left:254px;top:439px" width="16" height="16" viewBox="0 0 16 16"><g transform="translate(0.5 0.5)"><rect x="1.100" y="1.100" width="9.800" height="13.800" fill="none" stroke="#0da540" stroke-width="1.250"/><path d="M5.600 10.900L13.400 3.300" stroke="#f3f4f7" stroke-width="4.600" stroke-linecap="round"/><path d="M6 10.500L13.400 3.300" stroke="#0da540" stroke-width="3.100" stroke-linecap="round"/><path d="M4.100 12.500L4.500 9.600L7.100 12Z" fill="#0da540"/><path d="M6.300 10.300L13.100 3.600" stroke="#f3f4f7" stroke-width=".5" stroke-dasharray=".7 1" opacity=".8"/></g></svg>
<svg style="left:278px;top:439px" width="11" height="15.200" viewBox="0 0 11 15.200"><g transform="translate(0 0.9)"><rect x="2.800" y="0" width="5.400" height="2.600" rx=".9" fill="#f5190f"/><rect x="4" y="1" width="3" height=".8" fill="#fbb" /><path d="M0 5.700V4.100Q0 2 2.600 1.900H8.400Q11 2 11 4.100V5.700Z" fill="#f5190f"/><rect x="0" y="4.100" width="11" height=".7" fill="#fff" opacity=".4"/><path d="M.75 5.700H10V13.300Q10 15.100 8 15.100H2.750Q.75 15.100 .75 13.300Z" fill="#f5190f"/><rect x="2.300" y="6.800" width="2.400" height="6.900" fill="#fff" opacity=".45"/><rect x="5.100" y="6.800" width=".9" height="6.900" fill="#fff" opacity=".95"/><rect x="7.200" y="6.800" width=".8" height="6.900" fill="#fff" opacity=".85"/></g></svg>
<div class="a " style="left:315.97px;top:438px;font-size:15px;line-height:18px;letter-spacing:-0.46px;color:#222c3a;">DA1381C1</div>
<div class="a " style="left:513.07px;top:438px;font-size:15px;line-height:18px;letter-spacing:-0.46px;color:#222c3a;">MS_Prison_B</div>
<div class="a " style="left:710.23px;top:438px;font-size:15px;line-height:18px;letter-spacing:-0.01px;color:#222c3a;">36.32855</div>
<div class="a " style="left:907.43px;top:438px;font-size:15px;line-height:18px;letter-spacing:-0.03px;color:#222c3a;">33.66651944</div>
<div class="a " style="left:1103.77px;top:438px;font-size:15px;line-height:18px;letter-spacing:-0.46px;color:#222c3a;">DA1381C1</div>
<div class="a" style="left:244px;top:463px;width:1161px;height:32px;background:#fff;border-top:1px solid #e3e6ea"></div>
<svg style="left:254px;top:471px" width="16" height="16" viewBox="0 0 16 16"><g transform="translate(0.5 0.5)"><rect x="1.100" y="1.100" width="9.800" height="13.800" fill="none" stroke="#0da540" stroke-width="1.250"/><path d="M5.600 10.900L13.400 3.300" stroke="#fff" stroke-width="4.600" stroke-linecap="round"/><path d="M6 10.500L13.400 3.300" stroke="#0da540" stroke-width="3.100" stroke-linecap="round"/><path d="M4.100 12.500L4.500 9.600L7.100 12Z" fill="#0da540"/><path d="M6.300 10.300L13.100 3.600" stroke="#fff" stroke-width=".5" stroke-dasharray=".7 1" opacity=".8"/></g></svg>
<svg style="left:278px;top:471px" width="11" height="15.200" viewBox="0 0 11 15.200"><g transform="translate(0 0.9)"><rect x="2.800" y="0" width="5.400" height="2.600" rx=".9" fill="#f5190f"/><rect x="4" y="1" width="3" height=".8" fill="#fbb" /><path d="M0 5.700V4.100Q0 2 2.600 1.900H8.400Q11 2 11 4.100V5.700Z" fill="#f5190f"/><rect x="0" y="4.100" width="11" height=".7" fill="#fff" opacity=".4"/><path d="M.75 5.700H10V13.300Q10 15.100 8 15.100H2.750Q.75 15.100 .75 13.300Z" fill="#f5190f"/><rect x="2.300" y="6.800" width="2.400" height="6.900" fill="#fff" opacity=".45"/><rect x="5.100" y="6.800" width=".9" height="6.900" fill="#fff" opacity=".95"/><rect x="7.200" y="6.800" width=".8" height="6.900" fill="#fff" opacity=".85"/></g></svg>
<div class="a " style="left:315.97px;top:470px;font-size:15px;line-height:18px;letter-spacing:-0.33px;color:#222c3a;">DA0484C2</div>
<div class="a " style="left:513.07px;top:470px;font-size:15px;line-height:18px;letter-spacing:-0.23px;color:#222c3a;">Bustan_Aldour</div>
<div class="a " style="left:710.23px;top:470px;font-size:15px;line-height:18px;letter-spacing:0.1px;color:#222c3a;">36.31188056</div>
<div class="a " style="left:907.43px;top:470px;font-size:15px;line-height:18px;letter-spacing:-0px;color:#222c3a;">33.49793889</div>
<div class="a " style="left:1103.77px;top:470px;font-size:15px;line-height:18px;letter-spacing:-0.33px;color:#222c3a;">DA0484C2</div>
<div class="a" style="left:244px;top:495px;width:1161px;height:32px;background:#f3f4f7;border-top:1px solid #e3e6ea"></div>
<div class="a" style="left:303px;top:526px;width:1102px;height:1px;background:#fbfbfc"></div>
<svg style="left:254px;top:503px" width="16" height="16" viewBox="0 0 16 16"><g transform="translate(0.5 0.5)"><rect x="1.100" y="1.100" width="9.800" height="13.800" fill="none" stroke="#0da540" stroke-width="1.250"/><path d="M5.600 10.900L13.400 3.300" stroke="#f3f4f7" stroke-width="4.600" stroke-linecap="round"/><path d="M6 10.500L13.400 3.300" stroke="#0da540" stroke-width="3.100" stroke-linecap="round"/><path d="M4.100 12.500L4.500 9.600L7.100 12Z" fill="#0da540"/><path d="M6.300 10.300L13.100 3.600" stroke="#f3f4f7" stroke-width=".5" stroke-dasharray=".7 1" opacity=".8"/></g></svg>
<svg style="left:278px;top:503px" width="11" height="15.200" viewBox="0 0 11 15.200"><g transform="translate(0 0.9)"><rect x="2.800" y="0" width="5.400" height="2.600" rx=".9" fill="#f5190f"/><rect x="4" y="1" width="3" height=".8" fill="#fbb" /><path d="M0 5.700V4.100Q0 2 2.600 1.900H8.400Q11 2 11 4.100V5.700Z" fill="#f5190f"/><rect x="0" y="4.100" width="11" height=".7" fill="#fff" opacity=".4"/><path d="M.75 5.700H10V13.300Q10 15.100 8 15.100H2.750Q.75 15.100 .75 13.300Z" fill="#f5190f"/><rect x="2.300" y="6.800" width="2.400" height="6.900" fill="#fff" opacity=".45"/><rect x="5.100" y="6.800" width=".9" height="6.900" fill="#fff" opacity=".95"/><rect x="7.200" y="6.800" width=".8" height="6.900" fill="#fff" opacity=".85"/></g></svg>
<div class="a " style="left:316.23px;top:502px;font-size:15px;line-height:18px;letter-spacing:0.57px;color:#222c3a;">p211111</div>
<div class="a " style="left:513.33px;top:502px;font-size:15px;line-height:18px;letter-spacing:0.57px;color:#222c3a;">p211111</div>
<div class="a " style="left:710.23px;top:502px;font-size:15px;line-height:18px;letter-spacing:0.01px;color:#222c3a;">37.1737</div>
<div class="a " style="left:907.43px;top:502px;font-size:15px;line-height:18px;letter-spacing:-0.04px;color:#222c3a;">36.22374</div>
<div class="a" style="left:244px;top:527px;width:1161px;height:32px;background:#fff;border-top:1px solid #e3e6ea"></div>
<svg style="left:254px;top:535px" width="16" height="16" viewBox="0 0 16 16"><g transform="translate(0.5 0.5)"><rect x="1.100" y="1.100" width="9.800" height="13.800" fill="none" stroke="#0da540" stroke-width="1.250"/><path d="M5.600 10.900L13.400 3.300" stroke="#fff" stroke-width="4.600" stroke-linecap="round"/><path d="M6 10.500L13.400 3.300" stroke="#0da540" stroke-width="3.100" stroke-linecap="round"/><path d="M4.100 12.500L4.500 9.600L7.100 12Z" fill="#0da540"/><path d="M6.300 10.300L13.100 3.600" stroke="#fff" stroke-width=".5" stroke-dasharray=".7 1" opacity=".8"/></g></svg>
<svg style="left:278px;top:535px" width="11" height="15.200" viewBox="0 0 11 15.200"><g transform="translate(0 0.9)"><rect x="2.800" y="0" width="5.400" height="2.600" rx=".9" fill="#f5190f"/><rect x="4" y="1" width="3" height=".8" fill="#fbb" /><path d="M0 5.700V4.100Q0 2 2.600 1.900H8.400Q11 2 11 4.100V5.700Z" fill="#f5190f"/><rect x="0" y="4.100" width="11" height=".7" fill="#fff" opacity=".4"/><path d="M.75 5.700H10V13.300Q10 15.100 8 15.100H2.750Q.75 15.100 .75 13.300Z" fill="#f5190f"/><rect x="2.300" y="6.800" width="2.400" height="6.900" fill="#fff" opacity=".45"/><rect x="5.100" y="6.800" width=".9" height="6.900" fill="#fff" opacity=".95"/><rect x="7.200" y="6.800" width=".8" height="6.900" fill="#fff" opacity=".85"/></g></svg>
<div class="a " style="left:316.44px;top:534px;font-size:15px;line-height:18px;letter-spacing:-0.41px;color:#222c3a;">CA0150C5</div>
<div class="a " style="left:513.07px;top:534px;font-size:15px;line-height:18px;letter-spacing:0.25px;color:#222c3a;">Mat7af</div>
<div class="a " style="left:710.23px;top:534px;font-size:15px;line-height:18px;letter-spacing:-0.01px;color:#222c3a;">36.75595</div>
<div class="a " style="left:907.43px;top:534px;font-size:15px;line-height:18px;letter-spacing:-0.03px;color:#222c3a;">35.13981944</div>
<div class="a " style="left:1104.24px;top:534px;font-size:15px;line-height:18px;letter-spacing:-0.41px;color:#222c3a;">CA0150C5</div>
<div class="a" style="left:244px;top:559px;width:1161px;height:32px;background:#f3f4f7;border-top:1px solid #e3e6ea"></div>
<div class="a" style="left:303px;top:590px;width:1102px;height:1px;background:#fbfbfc"></div>
<svg style="left:254px;top:567px" width="16" height="16" viewBox="0 0 16 16"><g transform="translate(0.5 0.5)"><rect x="1.100" y="1.100" width="9.800" height="13.800" fill="none" stroke="#0da540" stroke-width="1.250"/><path d="M5.600 10.900L13.400 3.300" stroke="#f3f4f7" stroke-width="4.600" stroke-linecap="round"/><path d="M6 10.500L13.400 3.300" stroke="#0da540" stroke-width="3.100" stroke-linecap="round"/><path d="M4.100 12.500L4.500 9.600L7.100 12Z" fill="#0da540"/><path d="M6.300 10.300L13.100 3.600" stroke="#f3f4f7" stroke-width=".5" stroke-dasharray=".7 1" opacity=".8"/></g></svg>
<svg style="left:278px;top:567px" width="11" height="15.200" viewBox="0 0 11 15.200"><g transform="translate(0 0.9)"><rect x="2.800" y="0" width="5.400" height="2.600" rx=".9" fill="#f5190f"/><rect x="4" y="1" width="3" height=".8" fill="#fbb" /><path d="M0 5.700V4.100Q0 2 2.600 1.900H8.400Q11 2 11 4.100V5.700Z" fill="#f5190f"/><rect x="0" y="4.100" width="11" height=".7" fill="#fff" opacity=".4"/><path d="M.75 5.700H10V13.300Q10 15.100 8 15.100H2.750Q.75 15.100 .75 13.300Z" fill="#f5190f"/><rect x="2.300" y="6.800" width="2.400" height="6.900" fill="#fff" opacity=".45"/><rect x="5.100" y="6.800" width=".9" height="6.900" fill="#fff" opacity=".95"/><rect x="7.200" y="6.800" width=".8" height="6.900" fill="#fff" opacity=".85"/></g></svg>
<div class="a " style="left:317.17px;top:566px;font-size:15px;line-height:18px;letter-spacing:-0.45px;color:#222c3a;">AL0280C2</div>
<div class="a " style="left:513.07px;top:566px;font-size:15px;line-height:18px;letter-spacing:-0.25px;color:#222c3a;">Na3ora</div>
<div class="a " style="left:710.23px;top:566px;font-size:15px;line-height:18px;letter-spacing:-0.01px;color:#222c3a;">36.64013056</div>
<div class="a " style="left:907.43px;top:566px;font-size:15px;line-height:18px;letter-spacing:-0.01px;color:#222c3a;">35.93713056</div>
<div class="a " style="left:1104.97px;top:566px;font-size:15px;line-height:18px;letter-spacing:-0.45px;color:#222c3a;">AL0280C2</div>
<div class="a" style="left:244px;top:591px;width:1161px;height:32px;background:#fff;border-top:1px solid #e3e6ea"></div>
<svg style="left:254px;top:599px" width="16" height="16" viewBox="0 0 16 16"><g transform="translate(0.5 0.5)"><rect x="1.100" y="1.100" width="9.800" height="13.800" fill="none" stroke="#0da540" stroke-width="1.250"/><path d="M5.600 10.900L13.400 3.300" stroke="#fff" stroke-width="4.600" stroke-linecap="round"/><path d="M6 10.500L13.400 3.300" stroke="#0da540" stroke-width="3.100" stroke-linecap="round"/><path d="M4.100 12.500L4.500 9.600L7.100 12Z" fill="#0da540"/><path d="M6.300 10.300L13.100 3.600" stroke="#fff" stroke-width=".5" stroke-dasharray=".7 1" opacity=".8"/></g></svg>
<svg style="left:278px;top:599px" width="11" height="15.200" viewBox="0 0 11 15.200"><g transform="translate(0 0.9)"><rect x="2.800" y="0" width="5.400" height="2.600" rx=".9" fill="#f5190f"/><rect x="4" y="1" width="3" height=".8" fill="#fbb" /><path d="M0 5.700V4.100Q0 2 2.600 1.900H8.400Q11 2 11 4.100V5.700Z" fill="#f5190f"/><rect x="0" y="4.100" width="11" height=".7" fill="#fff" opacity=".4"/><path d="M.75 5.700H10V13.300Q10 15.100 8 15.100H2.750Q.75 15.100 .75 13.300Z" fill="#f5190f"/><rect x="2.300" y="6.800" width="2.400" height="6.900" fill="#fff" opacity=".45"/><rect x="5.100" y="6.800" width=".9" height="6.900" fill="#fff" opacity=".95"/><rect x="7.200" y="6.800" width=".8" height="6.900" fill="#fff" opacity=".85"/></g></svg>
<div class="a " style="left:317.17px;top:598px;font-size:15px;line-height:18px;letter-spacing:-0.45px;color:#222c3a;">AL0055C2</div>
<div class="a " style="left:513.07px;top:598px;font-size:15px;line-height:18px;letter-spacing:0.05px;color:#222c3a;">MidanAleppo</div>
<div class="a " style="left:710.23px;top:598px;font-size:15px;line-height:18px;letter-spacing:-0.04px;color:#222c3a;">37.1654</div>
<div class="a " style="left:907.43px;top:598px;font-size:15px;line-height:18px;letter-spacing:0.01px;color:#222c3a;">36.2192</div>
<div class="a " style="left:1104.97px;top:598px;font-size:15px;line-height:18px;letter-spacing:-0.45px;color:#222c3a;">AL0055C2</div>
<div class="a" style="left:244px;top:623px;width:1161px;height:32px;background:#f3f4f7;border-top:1px solid #e3e6ea"></div>
<div class="a" style="left:303px;top:654px;width:1102px;height:1px;background:#fbfbfc"></div>
<svg style="left:254px;top:631px" width="16" height="16" viewBox="0 0 16 16"><g transform="translate(0.5 0.5)"><rect x="1.100" y="1.100" width="9.800" height="13.800" fill="none" stroke="#0da540" stroke-width="1.250"/><path d="M5.600 10.900L13.400 3.300" stroke="#f3f4f7" stroke-width="4.600" stroke-linecap="round"/><path d="M6 10.500L13.400 3.300" stroke="#0da540" stroke-width="3.100" stroke-linecap="round"/><path d="M4.100 12.500L4.500 9.600L7.100 12Z" fill="#0da540"/><path d="M6.300 10.300L13.100 3.600" stroke="#f3f4f7" stroke-width=".5" stroke-dasharray=".7 1" opacity=".8"/></g></svg>
<svg style="left:278px;top:631px" width="11" height="15.200" viewBox="0 0 11 15.200"><g transform="translate(0 0.9)"><rect x="2.800" y="0" width="5.400" height="2.600" rx=".9" fill="#f5190f"/><rect x="4" y="1" width="3" height=".8" fill="#fbb" /><path d="M0 5.700V4.100Q0 2 2.600 1.900H8.400Q11 2 11 4.100V5.700Z" fill="#f5190f"/><rect x="0" y="4.100" width="11" height=".7" fill="#fff" opacity=".4"/><path d="M.75 5.700H10V13.300Q10 15.100 8 15.100H2.750Q.75 15.100 .75 13.300Z" fill="#f5190f"/><rect x="2.300" y="6.800" width="2.400" height="6.900" fill="#fff" opacity=".45"/><rect x="5.100" y="6.800" width=".9" height="6.900" fill="#fff" opacity=".95"/><rect x="7.200" y="6.800" width=".8" height="6.900" fill="#fff" opacity=".85"/></g></svg>
<div class="a " style="left:315.97px;top:630px;font-size:15px;line-height:18px;letter-spacing:-0.48px;color:#222c3a;">DA1480C1</div>
<div class="a " style="left:513.62px;top:630px;font-size:15px;line-height:18px;letter-spacing:-0.36px;color:#222c3a;">Swaika</div>
<div class="a " style="left:710.23px;top:630px;font-size:15px;line-height:18px;letter-spacing:0.56px;color:#222c3a;">36.30111111</div>
<div class="a " style="left:907.43px;top:630px;font-size:15px;line-height:18px;letter-spacing:-0.03px;color:#222c3a;">33.50166944</div>
<div class="a " style="left:1103.77px;top:630px;font-size:15px;line-height:18px;letter-spacing:-0.48px;color:#222c3a;">DA1480C1</div>
<div class="a" style="left:244px;top:655px;width:1161px;height:32px;background:#fff;border-top:1px solid #e3e6ea"></div>
<svg style="left:254px;top:663px" width="16" height="16" viewBox="0 0 16 16"><g transform="translate(0.5 0.5)"><rect x="1.100" y="1.100" width="9.800" height="13.800" fill="none" stroke="#0da540" stroke-width="1.250"/><path d="M5.600 10.900L13.400 3.300" stroke="#fff" stroke-width="4.600" stroke-linecap="round"/><path d="M6 10.500L13.400 3.300" stroke="#0da540" stroke-width="3.100" stroke-linecap="round"/><path d="M4.100 12.500L4.500 9.600L7.100 12Z" fill="#0da540"/><path d="M6.300 10.300L13.100 3.600" stroke="#fff" stroke-width=".5" stroke-dasharray=".7 1" opacity=".8"/></g></svg>
<svg style="left:278px;top:663px" width="11" height="15.200" viewBox="0 0 11 15.200"><g transform="translate(0 0.9)"><rect x="2.800" y="0" width="5.400" height="2.600" rx=".9" fill="#f5190f"/><rect x="4" y="1" width="3" height=".8" fill="#fbb" /><path d="M0 5.700V4.100Q0 2 2.600 1.900H8.400Q11 2 11 4.100V5.700Z" fill="#f5190f"/><rect x="0" y="4.100" width="11" height=".7" fill="#fff" opacity=".4"/><path d="M.75 5.700H10V13.300Q10 15.100 8 15.100H2.750Q.75 15.100 .75 13.300Z" fill="#f5190f"/><rect x="2.300" y="6.800" width="2.400" height="6.900" fill="#fff" opacity=".45"/><rect x="5.100" y="6.800" width=".9" height="6.900" fill="#fff" opacity=".95"/><rect x="7.200" y="6.800" width=".8" height="6.900" fill="#fff" opacity=".85"/></g></svg>
<div class="a " style="left:317.13px;top:662px;font-size:15px;line-height:18px;letter-spacing:-0.59px;color:#222c3a;">WA1050C1</div>
<div class="a " style="left:513.82px;top:662px;font-size:15px;line-height:18px;letter-spacing:-0.39px;color:#222c3a;">Zoc_Barakat</div>
<div class="a " style="left:710.23px;top:662px;font-size:15px;line-height:18px;letter-spacing:0.11px;color:#222c3a;">36.15893611</div>
<div class="a " style="left:907.43px;top:662px;font-size:15px;line-height:18px;letter-spacing:-0.01px;color:#222c3a;">34.83293333</div>
<div class="a " style="left:1104.93px;top:662px;font-size:15px;line-height:18px;letter-spacing:-0.59px;color:#222c3a;">WA1050C1</div>
<div class="a" style="left:244px;top:687px;width:1161px;height:32px;background:#f3f4f7;border-top:1px solid #e3e6ea"></div>
<div class="a" style="left:303px;top:718px;width:1102px;height:1px;background:#fbfbfc"></div>
<svg style="left:254px;top:695px" width="16" height="16" viewBox="0 0 16 16"><g transform="translate(0.5 0.5)"><rect x="1.100" y="1.100" width="9.800" height="13.800" fill="none" stroke="#0da540" stroke-width="1.250"/><path d="M5.600 10.900L13.400 3.300" stroke="#f3f4f7" stroke-width="4.600" stroke-linecap="round"/><path d="M6 10.500L13.400 3.300" stroke="#0da540" stroke-width="3.100" stroke-linecap="round"/><path d="M4.100 12.500L4.500 9.600L7.100 12Z" fill="#0da540"/><path d="M6.300 10.300L13.100 3.600" stroke="#f3f4f7" stroke-width=".5" stroke-dasharray=".7 1" opacity=".8"/></g></svg>
<svg style="left:278px;top:695px" width="11" height="15.200" viewBox="0 0 11 15.200"><g transform="translate(0 0.9)"><rect x="2.800" y="0" width="5.400" height="2.600" rx=".9" fill="#f5190f"/><rect x="4" y="1" width="3" height=".8" fill="#fbb" /><path d="M0 5.700V4.100Q0 2 2.600 1.900H8.400Q11 2 11 4.100V5.700Z" fill="#f5190f"/><rect x="0" y="4.100" width="11" height=".7" fill="#fff" opacity=".4"/><path d="M.75 5.700H10V13.300Q10 15.100 8 15.100H2.750Q.75 15.100 .75 13.300Z" fill="#f5190f"/><rect x="2.300" y="6.800" width="2.400" height="6.900" fill="#fff" opacity=".45"/><rect x="5.100" y="6.800" width=".9" height="6.900" fill="#fff" opacity=".95"/><rect x="7.200" y="6.800" width=".8" height="6.900" fill="#fff" opacity=".85"/></g></svg>
<div class="a " style="left:315.97px;top:694px;font-size:15px;line-height:18px;letter-spacing:-0.34px;color:#222c3a;">DA0277C2</div>
<div class="a " style="left:514.07px;top:694px;font-size:15px;line-height:18px;letter-spacing:0.04px;color:#222c3a;">Jarash</div>
<div class="a " style="left:710.23px;top:694px;font-size:15px;line-height:18px;letter-spacing:-0.01px;color:#222c3a;">36.288975</div>
<div class="a " style="left:907.43px;top:694px;font-size:15px;line-height:18px;letter-spacing:-0.03px;color:#222c3a;">33.53321944</div>
<div class="a " style="left:1103.77px;top:694px;font-size:15px;line-height:18px;letter-spacing:-0.34px;color:#222c3a;">DA0277C2</div>
<div class="a" style="left:244px;top:719px;width:1161px;height:32px;background:#fff;border-top:1px solid #e3e6ea"></div>
<svg style="left:254px;top:727px" width="16" height="16" viewBox="0 0 16 16"><g transform="translate(0.5 0.5)"><rect x="1.100" y="1.100" width="9.800" height="13.800" fill="none" stroke="#0da540" stroke-width="1.250"/><path d="M5.600 10.900L13.400 3.300" stroke="#fff" stroke-width="4.600" stroke-linecap="round"/><path d="M6 10.500L13.400 3.300" stroke="#0da540" stroke-width="3.100" stroke-linecap="round"/><path d="M4.100 12.500L4.500 9.600L7.100 12Z" fill="#0da540"/><path d="M6.300 10.300L13.100 3.600" stroke="#fff" stroke-width=".5" stroke-dasharray=".7 1" opacity=".8"/></g></svg>
<svg style="left:278px;top:727px" width="11" height="15.200" viewBox="0 0 11 15.200"><g transform="translate(0 0.9)"><rect x="2.800" y="0" width="5.400" height="2.600" rx=".9" fill="#f5190f"/><rect x="4" y="1" width="3" height=".8" fill="#fbb" /><path d="M0 5.700V4.100Q0 2 2.600 1.900H8.400Q11 2 11 4.100V5.700Z" fill="#f5190f"/><rect x="0" y="4.100" width="11" height=".7" fill="#fff" opacity=".4"/><path d="M.75 5.700H10V13.300Q10 15.100 8 15.100H2.750Q.75 15.100 .75 13.300Z" fill="#f5190f"/><rect x="2.300" y="6.800" width="2.400" height="6.900" fill="#fff" opacity=".45"/><rect x="5.100" y="6.800" width=".9" height="6.900" fill="#fff" opacity=".95"/><rect x="7.200" y="6.800" width=".8" height="6.900" fill="#fff" opacity=".85"/></g></svg>
<div class="a " style="left:315.97px;top:726px;font-size:15px;line-height:18px;letter-spacing:-0.44px;color:#222c3a;">MANH-ASIA-C4</div>
<div class="a " style="left:513.07px;top:726px;font-size:15px;line-height:18px;letter-spacing:-0.44px;color:#222c3a;">MANH-ASIA-C4</div>
<div class="a " style="left:710.46px;top:726px;font-size:15px;line-height:18px;letter-spacing:-0.04px;color:#222c3a;">44.29968</div>
<div class="a " style="left:907.43px;top:726px;font-size:15px;line-height:18px;letter-spacing:-0.01px;color:#222c3a;">33.31256</div>
<div class="a" style="left:244px;top:751px;width:1161px;height:32px;background:#f3f4f7;border-top:1px solid #e3e6ea"></div>
<div class="a" style="left:303px;top:782px;width:1102px;height:1px;background:#fbfbfc"></div>
<svg style="left:1407px;top:293px" width="9.200" height="7" viewBox="0 0 9.200 7"><g transform="translate(0.9 0.9)"><path d="M4.600 0L9.200 6Q9.200 7 8.200 7H1Q0 7 0 6Z" fill="#8b8b8b"/></g></svg>
<div class="a" style="left:1408px;top:307px;width:9px;height:17px;border-radius:4.500px;background:#8b8b8b"></div>
<div class="a" style="left:231px;top:280px;width:1191px;height:50px;border:2px solid #e8161c"></div>
</div>
</body>
</html>
